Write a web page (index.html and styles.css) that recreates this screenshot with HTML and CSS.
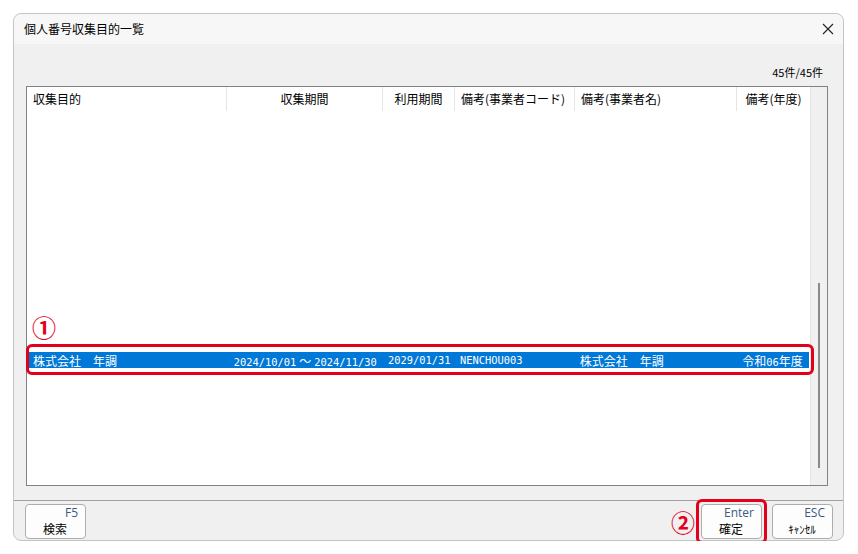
FILE: index.html
```html
<!DOCTYPE html>
<html lang="ja">
<head>
  <meta charset="UTF-8">
  <title>個人番号収集目的一覧</title>
  <link rel="stylesheet" href="styles.css">
</head>
<body>
  <div class="window">
    <div class="titlebar">
      <span class="title">個人番号収集目的一覧</span>
      <svg class="close" width="12" height="12" viewBox="0 0 12 12">
        <path d="M1 1L11 11M11 1L1 11" stroke="#222" stroke-width="1.1" fill="none"/>
      </svg>
    </div>
    <div class="content">
      <div class="count">45件/45件</div>
      <div class="listbox">
        <div class="list">
          <div class="row head">
            <span class="c1">収集目的</span>
            <span class="c2">収集期間</span>
            <span class="c3">利用期間</span>
            <span class="c4">備考(事業者コード)</span>
            <span class="c5">備考(事業者名)</span>
            <span class="c6">備考(年度)</span>
          </div>
          <div class="rows">
            <div class="mark mark1">①</div>
            <div class="row sel">
              <span class="c1">株式会社　年調</span>
              <span class="c2"><span class="num">2024/10/01</span><span class="wave">～</span><span class="num">2024/11/30</span></span>
              <span class="c3 num">2029/01/31</span>
              <span class="c4 num">NENCHOU003</span>
              <span class="c5">株式会社　年調</span>
              <span class="c6">令和<span class="num">06</span>年度</span>
            </div>
            <div class="box box1"></div>
          </div>
        </div>
        <div class="scroll">
          <div class="scroll-head"></div>
          <div class="scroll-track"><div class="thumb"></div></div>
        </div>
      </div>
    </div>
    <div class="footer">
      <button class="btn"><span class="key">F5</span><span class="lbl">検索</span></button>
      <div class="spacer"></div>
      <div class="mark mark2">②</div>
      <div class="btn-wrap">
        <button class="btn"><span class="key">Enter</span><span class="lbl">確定</span></button>
        <div class="box box2"></div>
      </div>
      <button class="btn"><span class="key">ESC</span><span class="lbl small">ｷｬﾝｾﾙ</span></button>
    </div>
  </div>
</body>
</html>
```

FILE: styles.css
```css
html, body {
  margin: 0;
  background: #fff;
}
body {
  padding: 13px 14px 0 13px;
  font-family: "Noto Sans CJK JP", "Liberation Sans", sans-serif;
  font-size: 12px;
  color: #000;
}
.window {
  width: 829px;
  height: 526px;
  border: 1px solid #c4c4c4;
  border-radius: 8px;
  background: #f0f0f0;
  display: flex;
  flex-direction: column;
}
.titlebar {
  height: 30px;
  flex: none;
  background: #f7f7f7;
  border-radius: 8px 8px 0 0;
  display: flex;
  align-items: center;
  padding: 0 9px 0 10px;
}
.title {
  flex: 1;
  font-size: 12px;
  line-height: 1;
}
.content {
  flex: 1;
  padding: 0 15px 14px 12px;
  display: flex;
  flex-direction: column;
}
.count {
  height: 42px;
  display: flex;
  align-items: flex-end;
  justify-content: flex-end;
  padding: 0 5px 8px 0;
  box-sizing: border-box;
  font-size: 11px;
  line-height: 1;
}
.listbox {
  flex: 1;
  border: 1px solid #828282;
  background: #fff;
  display: flex;
}
.list {
  flex: 1;
  display: flex;
  flex-direction: column;
}
.row {
  display: flex;
  align-items: center;
  white-space: nowrap;
}
.row > span {
  box-sizing: border-box;
  padding: 0 6px;
}
.c1 { width: 200px; }
.c2 { width: 156px; text-align: center; }
.c3 { width: 72px; text-align: center; }
.c4 { width: 120px; }
.c5 { width: 162px; }
.c6 { width: 73px; text-align: center; }
.head {
  height: 24px;
  font-size: 12px;
}
.head > span {
  border-right: 1px solid #e5e5e5;
  height: 24px;
  line-height: 24px;
}
.head > .c6 { border-right: 0; }
.rows {
  flex: 1;
  position: relative;
}
.sel {
  position: absolute;
  left: 1px;
  top: 241px;
  height: 16px;
  width: 781px;
  background: #0078d7;
  color: #fff;
  font-size: 12px;
}
.sel > span { padding: 0 5px; }
.num {
  font-family: "DejaVu Sans Mono", monospace;
  font-size: 10.4px;
}
.wave { margin: 0 3px; }
.mark {
  color: #e3001b;
  font-size: 24px;
  font-weight: bold;
  line-height: 1;
}
.mark1 {
  position: absolute;
  left: 5px;
  top: 204px;
}
.box {
  position: absolute;
  z-index: 2;
  border: 3px solid #e3001b;
  border-radius: 6px;
}
.box1 {
  left: -1px;
  top: 233px;
  width: 782px;
  height: 25px;
}
.scroll {
  width: 17px;
  display: flex;
  flex-direction: column;
  border-left: 1px solid #e5e5e5;
}
.scroll-head {
  height: 24px;
  background: #f0f0f0;
}
.scroll-track {
  flex: 1;
  background: #f0f0f0;
  position: relative;
}
.thumb {
  position: absolute;
  left: 7px;
  top: 172px;
  width: 2px;
  height: 185px;
  background: #8a8a8a;
}
.footer {
  height: 40px;
  flex: none;
  box-sizing: border-box;
  border-top: 1px solid #a0a0a0;
  display: flex;
  align-items: flex-start;
  padding: 3px 10px 0 11px;
  gap: 10px;
}
.spacer { flex: 1; }
.btn {
  width: 61px;
  height: 35px;
  box-sizing: border-box;
  border: 1px solid #adadad;
  border-radius: 4px;
  background: #fdfdfd;
  padding: 0 7px 0 0;
  display: flex;
  flex-direction: column;
  font-family: inherit;
}
.key {
  align-self: flex-end;
  color: #3a5a82;
  font-family: "Open Sans", "Liberation Sans", sans-serif;
  font-size: 12px;
  line-height: 16px;
}
.lbl {
  align-self: center;
  font-size: 12px;
  line-height: 16px;
  margin-left: 6px;
}
.lbl.small { font-size: 11px; }
.mark2 {
  margin: 6px -4px 0 0;
}
.btn-wrap {
  position: relative;
}
.box2 {
  left: -5px;
  top: -5px;
  width: 65px;
  height: 39px;
}
```
